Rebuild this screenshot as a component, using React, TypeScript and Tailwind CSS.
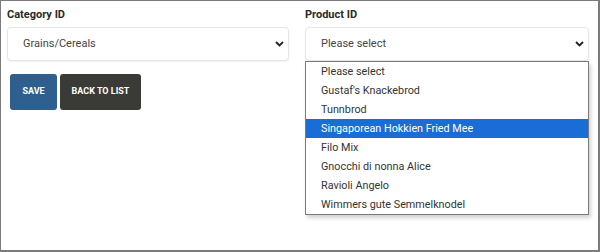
import React from "react";

const products = [
  "Please select",
  "Gustaf's Knackebrod",
  "Tunnbrod",
  "Singaporean Hokkien Fried Mee",
  "Filo Mix",
  "Gnocchi di nonna Alice",
  "Ravioli Angelo",
  "Wimmers gute Semmelknodel",
];

function Chevron() {
  return (
    <svg width="9" height="6" viewBox="0 0 9 6" className="shrink-0">
      <polyline
        points="1,1 4.5,4.5 8,1"
        fill="none"
        stroke="#222"
        strokeWidth="1.8"
      />
    </svg>
  );
}

function FakeSelect({ value }: { value: string }) {
  return (
    <div className="h-[34px] flex items-center justify-between pl-[15px] pr-[4px] rounded-[4px] border border-[#e6e6e6] bg-white shadow-[0_1px_2px_rgba(0,0,0,0.06)] text-[11px] text-[#444]">
      <span className="pt-[1px]">{value}</span>
      <Chevron />
    </div>
  );
}

export default function App() {
  const selected = 3;

  return (
    <div
      className="w-[600px] h-[252px] border border-[#7b7b7b] border-b-2 border-r-2 bg-white"
      style={{ fontFamily: "Roboto, 'Liberation Sans', sans-serif" }}
    >
      <div className="grid grid-cols-[282px_284px] gap-x-[16px] pl-[6px] pt-[6px]">
        <div>
          <label className="block text-[11px] font-bold text-[#2a2a2a] mb-[4px] leading-[16px]">
            Category ID
          </label>
          <FakeSelect value="Grains/Cereals" />
          <div className="flex gap-[3px] mt-[13px] ml-[3px]">
            <button className="h-[36px] w-[47px] rounded-[3px] bg-[#2f5f8f] text-white text-[9px] font-bold">
              SAVE
            </button>
            <button className="h-[36px] w-[81px] rounded-[3px] bg-[#3a3a37] text-white text-[9px] font-bold">
              BACK TO LIST
            </button>
          </div>
        </div>

        <div>
          <label className="block text-[11px] font-bold text-[#2a2a2a] mb-[4px] leading-[16px]">
            Product ID
          </label>
          <div className="relative">
            <FakeSelect value="Please select" />
            <ul className="absolute left-0 right-0 top-full bg-white border border-[#7a7a7a] shadow-[2px_3px_4px_rgba(0,0,0,0.18)] text-[10.8px] text-[#333]">
              {products.map((p, i) => (
                <li
                  key={p}
                  className={
                    "h-[19px] leading-[19px] pl-[15px] " +
                    (i === selected ? "bg-[#1a6dd6] text-white" : "")
                  }
                >
                  {p}
                </li>
              ))}
            </ul>
          </div>
        </div>
      </div>
    </div>
  );
}
